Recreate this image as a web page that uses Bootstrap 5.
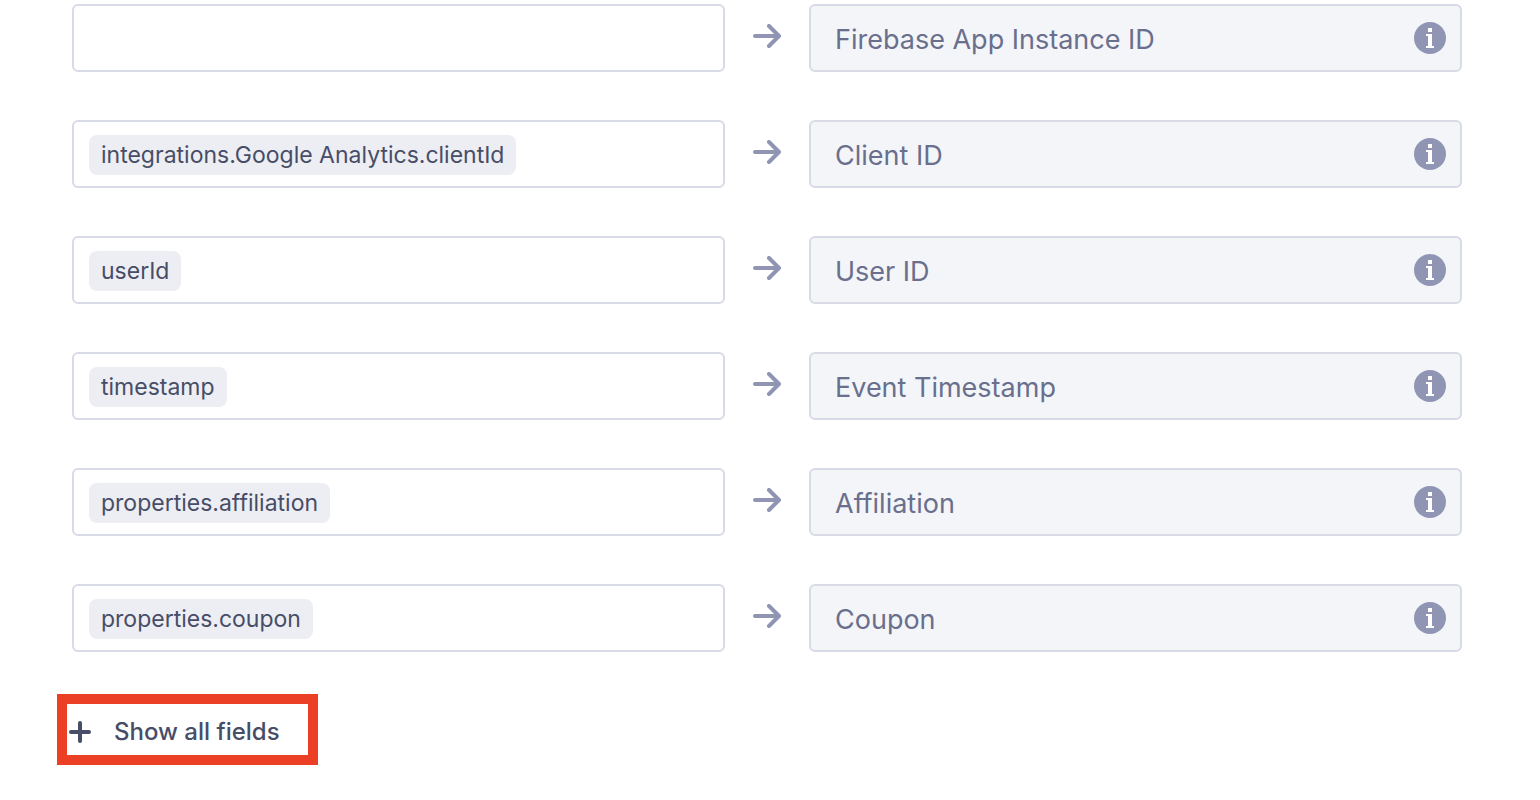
<!DOCTYPE html>
<html lang="en">
<head>
<meta charset="utf-8">
<meta name="viewport" content="width=device-width, initial-scale=1">
<title>Field mappings</title>
<link href="https://cdn.jsdelivr.net/npm/bootstrap@5.3.0/dist/css/bootstrap.min.css" rel="stylesheet">
<style>
  body { font-family: Inter, "Liberation Sans", sans-serif; color: #474d66; background: #fff; }
  .mapping-page { padding: 4px 78px 32px 72px; }
  .mapping-list { gap: 48px; }
  .mapping-row { grid-template-columns: minmax(0, 1fr) 84px minmax(0, 1fr); }
  .field-box { height: 68px; border: 2px solid #d8dae5; border-radius: 6px; }
  .field-box input { flex: 1 1 0; min-width: 0; border: 0; outline: 0; background: transparent; color: inherit; }
  .source-box { padding: 2px 15px 0; background: #fff; }
  .target-box { padding: 0 14px 0 24px; background: #f4f5f9; color: #696f8c; }
  .target-box input { padding: 4px 0 0; font-size: 27px; }
  .chip { height: 40px; padding: 0 12px; border-radius: 8px; background: #edeef4; font-size: 23px; line-height: 40px; white-space: nowrap; }
  .arrow-cell { padding-bottom: 4px; }
  .info-btn { line-height: 0; }
  .show-all { margin-top: 42px; width: 261px; height: 71px; padding: 5px 0 0 2px; gap: 23px; border: 10px solid #eb4026; border-radius: 0; margin-left: -15px; background: #fff; color: #474d66; font-size: 24px; font-weight: 500; white-space: nowrap; }
</style>
</head>
<body>
<svg class="d-none" aria-hidden="true">
  <symbol id="arrow" viewBox="0 0 28 24"><path d="M2 12h24M16 2l10 10-10 10" fill="none" stroke="#8f95b2" stroke-width="4" stroke-linecap="round" stroke-linejoin="round"/></symbol>
  <symbol id="info" viewBox="0 0 32 32"><circle cx="16" cy="16" r="16" fill="#8f95b2"/><path d="M14 6h4v4h-4zM12 12h6v12h2v2h-8v-2h2V14h-2z" fill="#fff"/></symbol>
</svg>
<main class="mapping-page">
  <form>
    <div class="mapping-list d-flex flex-column">
      <div class="mapping-row d-grid align-items-center">
        <div class="field-box source-box d-flex align-items-center"><input type="text" aria-label="Source for Firebase App Instance ID"></div>
        <div class="arrow-cell d-flex justify-content-center"><svg width="28" height="24" aria-hidden="true"><use href="#arrow"/></svg></div>
        <div class="field-box target-box d-flex align-items-center"><input type="text" readonly value="Firebase App Instance ID" aria-label="Destination field 1"><button type="button" class="info-btn btn p-0 border-0" aria-label="About Firebase App Instance ID"><svg width="32" height="32"><use href="#info"/></svg></button></div>
      </div>
      <div class="mapping-row d-grid align-items-center">
        <div class="field-box source-box d-flex align-items-center"><span class="chip">integrations.Google Analytics.clientId</span><input type="text" aria-label="Source for Client ID"></div>
        <div class="arrow-cell d-flex justify-content-center"><svg width="28" height="24" aria-hidden="true"><use href="#arrow"/></svg></div>
        <div class="field-box target-box d-flex align-items-center"><input type="text" readonly value="Client ID" aria-label="Destination field 2"><button type="button" class="info-btn btn p-0 border-0" aria-label="About Client ID"><svg width="32" height="32"><use href="#info"/></svg></button></div>
      </div>
      <div class="mapping-row d-grid align-items-center">
        <div class="field-box source-box d-flex align-items-center"><span class="chip">userId</span><input type="text" aria-label="Source for User ID"></div>
        <div class="arrow-cell d-flex justify-content-center"><svg width="28" height="24" aria-hidden="true"><use href="#arrow"/></svg></div>
        <div class="field-box target-box d-flex align-items-center"><input type="text" readonly value="User ID" aria-label="Destination field 3"><button type="button" class="info-btn btn p-0 border-0" aria-label="About User ID"><svg width="32" height="32"><use href="#info"/></svg></button></div>
      </div>
      <div class="mapping-row d-grid align-items-center">
        <div class="field-box source-box d-flex align-items-center"><span class="chip">timestamp</span><input type="text" aria-label="Source for Event Timestamp"></div>
        <div class="arrow-cell d-flex justify-content-center"><svg width="28" height="24" aria-hidden="true"><use href="#arrow"/></svg></div>
        <div class="field-box target-box d-flex align-items-center"><input type="text" readonly value="Event Timestamp" aria-label="Destination field 4"><button type="button" class="info-btn btn p-0 border-0" aria-label="About Event Timestamp"><svg width="32" height="32"><use href="#info"/></svg></button></div>
      </div>
      <div class="mapping-row d-grid align-items-center">
        <div class="field-box source-box d-flex align-items-center"><span class="chip">properties.affiliation</span><input type="text" aria-label="Source for Affiliation"></div>
        <div class="arrow-cell d-flex justify-content-center"><svg width="28" height="24" aria-hidden="true"><use href="#arrow"/></svg></div>
        <div class="field-box target-box d-flex align-items-center"><input type="text" readonly value="Affiliation" aria-label="Destination field 5"><button type="button" class="info-btn btn p-0 border-0" aria-label="About Affiliation"><svg width="32" height="32"><use href="#info"/></svg></button></div>
      </div>
      <div class="mapping-row d-grid align-items-center">
        <div class="field-box source-box d-flex align-items-center"><span class="chip">properties.coupon</span><input type="text" aria-label="Source for Coupon"></div>
        <div class="arrow-cell d-flex justify-content-center"><svg width="28" height="24" aria-hidden="true"><use href="#arrow"/></svg></div>
        <div class="field-box target-box d-flex align-items-center"><input type="text" readonly value="Coupon" aria-label="Destination field 6"><button type="button" class="info-btn btn p-0 border-0" aria-label="About Coupon"><svg width="32" height="32"><use href="#info"/></svg></button></div>
      </div>
    </div>
    <button type="button" class="show-all btn d-flex align-items-center">
      <svg width="22" height="22" viewBox="0 0 22 22" aria-hidden="true"><path d="M11 2v18M2 11h18" stroke="#474d66" stroke-width="4" stroke-linecap="round"/></svg>
      <span>Show all fields</span>
    </button>
  </form>
</main>
<script src="https://cdn.jsdelivr.net/npm/bootstrap@5.3.0/dist/js/bootstrap.bundle.min.js"></script>
</body>
</html>
